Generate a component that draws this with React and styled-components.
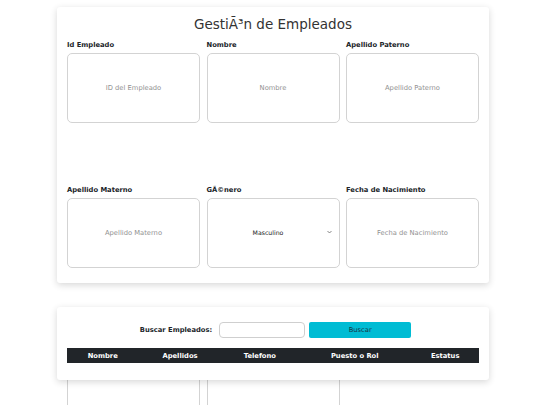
import React from "react";
import styled, { createGlobalStyle } from "styled-components";

const GlobalStyle = createGlobalStyle`
  body {
    margin: 0;
    padding: 0;
    background: #ffffff;
    font-family: "DejaVu Sans", "Liberation Sans", sans-serif;
    color: #212529;
  }
  * {
    box-sizing: border-box;
  }
`;

const Page = styled.div`
  min-height: 420px;
  padding: 7px 0 0 57px;
`;

const Card = styled.div`
  width: 432px;
  background: #ffffff;
  border-radius: 3px;
  box-shadow: 0 2px 7px rgba(0, 0, 0, 0.16);
`;

const FormCard = styled(Card)`
  height: 276px;
  padding: 9px 10px;
`;

const SearchCard = styled(Card)`
  position: relative;
  margin-top: 24px;
  padding: 15px 10px 17px;
`;

const Title = styled.h2`
  margin: 0 0 9px;
  font-size: 13.5px;
  line-height: 16px;
  font-weight: 400;
  text-align: center;
  color: #333333;
`;

const FieldGrid = styled.div`
  display: grid;
  grid-template-columns: repeat(3, 1fr);
  grid-auto-rows: 82px;
  column-gap: 6.5px;
  row-gap: 62.5px;
`;

const Field = styled.div`
  display: flex;
  flex-direction: column;
`;

const Label = styled.label`
  font-size: 6.75px;
  line-height: 8px;
  font-weight: 700;
  margin-bottom: 4px;
  color: #212529;
`;

const TextInput = styled.input`
  width: 100%;
  height: 70px;
  padding: 0;
  border: 1px solid #d3d3d3;
  border-radius: 5px;
  background: #ffffff;
  text-align: center;
  font-family: "DejaVu Sans", sans-serif;
  font-size: 6.75px;
  color: #333333;

  &::placeholder {
    color: #929292;
  }
`;

const SelectWrap = styled.div`
  position: relative;
  height: 70px;
`;

const Select = styled.select`
  appearance: none;
  width: 100%;
  height: 70px;
  padding: 0 10px 0 0;
  border: 1px solid #d3d3d3;
  border-radius: 5px;
  background: #ffffff;
  text-align: center;
  text-align-last: center;
  font-family: "DejaVu Sans", sans-serif;
  font-size: 6.2px;
  color: #222222;
`;

const Chevron = styled.svg`
  position: absolute;
  right: 8px;
  top: 32px;
  width: 5px;
  height: 4px;
  pointer-events: none;
`;

const SearchRow = styled.div`
  display: flex;
  justify-content: center;
  align-items: center;
  padding-left: 5px;
  margin-bottom: 10px;
`;

const SearchLabel = styled.span`
  font-size: 6.75px;
  font-weight: 700;
  margin-right: 7px;
`;

const SearchInput = styled.input`
  width: 86px;
  height: 16px;
  border: 1px solid #cfcfcf;
  border-radius: 4px;
  padding: 0 4px;
  font-size: 6.75px;
`;

const SearchButton = styled.button`
  width: 102px;
  height: 16px;
  margin-left: 4px;
  border: none;
  border-radius: 2px;
  background: #00bcd4;
  color: #17394a;
  font-family: "DejaVu Sans", sans-serif;
  font-size: 6.75px;
  padding: 0;
`;

const Table = styled.table`
  width: 100%;
  border-collapse: collapse;
`;

const HeadCell = styled.th`
  background: #212529;
  color: #ffffff;
  font-size: 6.75px;
  line-height: 8px;
  font-weight: 700;
  text-align: center;
  padding: 3.5px 0;
`;

const fields = [
  { label: "Id Empleado", placeholder: "ID del Empleado" },
  { label: "Nombre", placeholder: "Nombre" },
  { label: "Apellido Paterno", placeholder: "Apellido Paterno" },
  { label: "Apellido Materno", placeholder: "Apellido Materno" },
  { label: "GÃ©nero", select: ["Masculino", "Femenino"] },
  { label: "Fecha de Nacimiento", placeholder: "Fecha de Nacimiento" },
  { label: "Telefono", placeholder: "Telefono" },
  { label: "Puesto o Rol", placeholder: "Puesto o Rol" }
];

const columns = ["Nombre", "Apellidos", "Telefono", "Puesto o Rol", "Estatus"];

const App = () => {
  return (
    <Page>
      <GlobalStyle />
      <FormCard>
        <Title>GestiÃ³n de Empleados</Title>
        <FieldGrid>
          {fields.map(field => (
            <Field key={field.label}>
              <Label>{field.label}</Label>
              {field.select ? (
                <SelectWrap>
                  <Select defaultValue={field.select[0]}>
                    {field.select.map(option => (
                      <option key={option}>{option}</option>
                    ))}
                  </Select>
                  <Chevron viewBox="0 0 10 6">
                    <path
                      d="M1 1l4 4 4-4"
                      fill="none"
                      stroke="#555"
                      strokeWidth="1.4"
                    />
                  </Chevron>
                </SelectWrap>
              ) : (
                <TextInput placeholder={field.placeholder} />
              )}
            </Field>
          ))}
        </FieldGrid>
      </FormCard>
      <SearchCard>
        <SearchRow>
          <SearchLabel>Buscar Empleados:</SearchLabel>
          <SearchInput />
          <SearchButton>Buscar</SearchButton>
        </SearchRow>
        <Table>
          <thead>
            <tr>
              {columns.map(col => (
                <HeadCell key={col}>{col}</HeadCell>
              ))}
            </tr>
          </thead>
        </Table>
      </SearchCard>
    </Page>
  );
};

export default App;
